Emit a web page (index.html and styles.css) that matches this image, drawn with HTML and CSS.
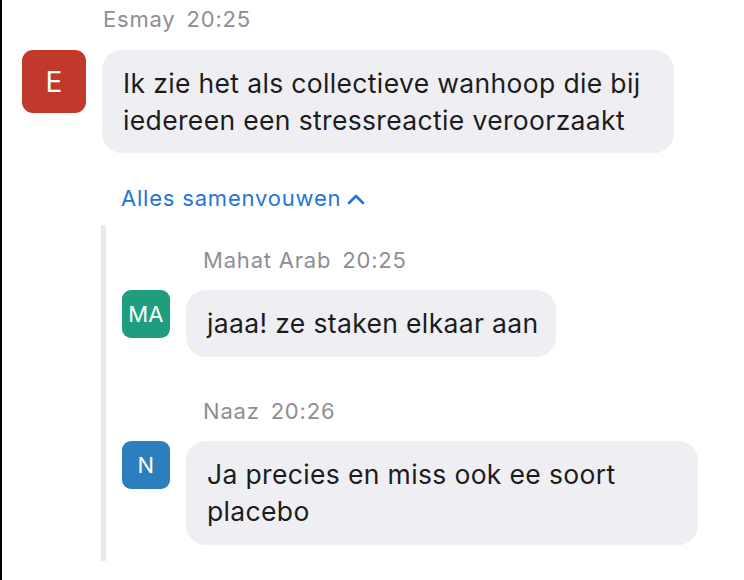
FILE: index.html
```html
<!DOCTYPE html>
<html>
<head>
<meta charset="utf-8">
<link rel="stylesheet" href="styles.css">
</head>
<body>
<div class="page">
  <div class="msg top">
    <div class="meta meta-top"><span>Esmay</span><span>20:25</span></div>
    <div class="row">
      <div class="avatar big red">E</div>
      <div class="bubble b1">Ik zie het als collectieve wanhoop die bij iedereen een stressreactie veroorzaakt</div>
    </div>
  </div>
  <div class="collapse">Alles samenvouwen
    <svg class="chev" width="18" height="12" viewBox="0 0 18 12"><path d="M2 10 L9 3 L16 10" fill="none" stroke="#1f76d6" stroke-width="2.6" stroke-linecap="round" stroke-linejoin="round"/></svg>
  </div>
  <div class="thread">
    <div class="msg reply">
      <div class="meta meta-reply"><span>Mahat Arab</span><span>20:25</span></div>
      <div class="row">
        <div class="avatar small green">MA</div>
        <div class="bubble b2">jaaa! ze staken elkaar aan</div>
      </div>
    </div>
    <div class="msg reply second">
      <div class="meta meta-reply"><span>Naaz</span><span>20:26</span></div>
      <div class="row">
        <div class="avatar small blue">N</div>
        <div class="bubble b3">Ja precies en miss ook ee soort placebo</div>
      </div>
    </div>
  </div>
</div>
</body>
</html>
```

FILE: styles.css
```css
html, body {
  margin: 0;
  padding: 0;
  background: #ffffff;
}
body {
  width: 744px;
  height: 580px;
  overflow: hidden;
  font-family: Inter, "Liberation Sans", sans-serif;
  color: #1c1c1e;
}
.page {
  border-left: 2px solid #000;
  height: 580px;
  box-sizing: border-box;
}
.meta {
  display: flex;
  gap: 11px;
  font-size: 22px;
  letter-spacing: 0.8px;
  color: #8e8e93;
  line-height: 26px;
}
.meta-top {
  margin-left: 101px;
  padding-top: 6px;
  height: 50px;
  box-sizing: border-box;
}
.row {
  display: flex;
  align-items: flex-start;
}
.top .row {
  margin-left: 20px;
  gap: 16px;
}
.avatar {
  flex: none;
  display: flex;
  align-items: center;
  justify-content: center;
  color: #fff;
}
.avatar.big {
  width: 64px;
  height: 63px;
  border-radius: 11px;
  font-size: 28px;
}
.avatar.small {
  width: 48px;
  height: 48px;
  border-radius: 9px;
  font-size: 22px;
  letter-spacing: 0.3px;
}
.red { background: #c0392b; }
.green { background: #1e9e7f; }
.blue { background: #2a7fbc; }
.bubble {
  background: #efeff3;
  border-radius: 20px;
  font-size: 26.5px;
  letter-spacing: 0.35px;
  line-height: 37px;
  padding: 15px 21px;
  box-sizing: border-box;
}
.b1 { width: 572px; height: 103px; }
.b2 { width: 370px; height: 67px; white-space: nowrap; }
.b3 { width: 512px; height: 104px; }
.collapse {
  margin-left: 119px;
  margin-top: 32px;
  height: 26px;
  font-size: 22px;
  letter-spacing: 0.8px;
  line-height: 26px;
  color: #1f76d6;
  display: flex;
  align-items: center;
  gap: 6px;
}
.chev { margin-top: 2px; }
.thread {
  margin-left: 99px;
  margin-top: 14px;
  border-left: 5px solid #e9e9ec;
  height: 336px;
  box-sizing: border-box;
  padding-top: 22px;
}
.meta-reply {
  margin-left: 97px;
  height: 43px;
}
.reply .row {
  margin-left: 16px;
  gap: 16px;
}
.reply.second {
  margin-top: 41px;
}
```
